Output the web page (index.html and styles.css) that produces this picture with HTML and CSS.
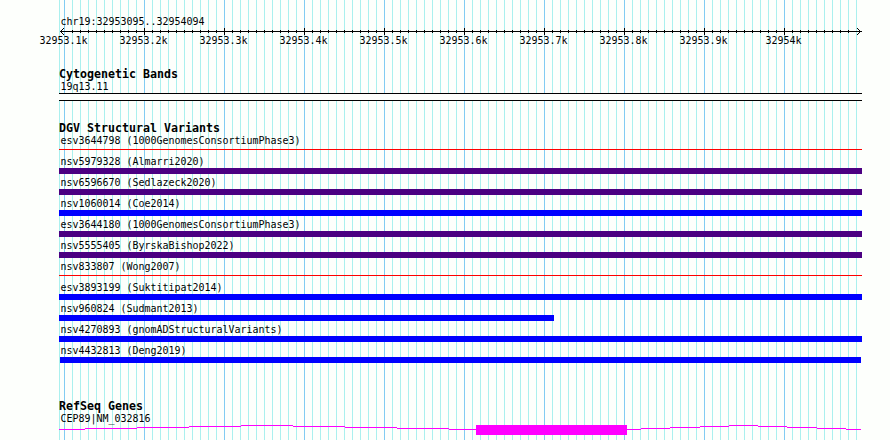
FILE: index.html
```
<!DOCTYPE html>
<html>
    <head>
        <meta charset="utf-8">
        <title>chr19:32953095..32954094</title>
        <link rel="stylesheet" href="styles.css">
    </head>
    <body>
        <div class="browser">
            <div class="region">chr19:32953095..32954094</div>
            <svg class="ruler" width="804" height="8" viewBox="0 0 804 8" shape-rendering="crispEdges">
                <defs>
                    <pattern id="minor" x="5" width="8" height="8" patternUnits="userSpaceOnUse">
                        <rect x="0" y="2" width="1" height="3"/>
                    </pattern>
                    <pattern id="major" x="5" width="80" height="8" patternUnits="userSpaceOnUse">
                        <rect x="0" y="0" width="1" height="7"/>
                    </pattern>
                </defs>
                <rect x="1" y="3" width="802" height="1"/>
                <rect x="12" y="0" width="780" height="8" fill="url(#minor)"/>
                <rect x="12" y="0" width="780" height="8" fill="url(#major)"/>
                <!-- arrow heads -->
                <path d="M2 2h1v1h-1zM3 1h1v1h-1zM4 0h1v1h-1zM2 4h1v1h-1zM3 5h1v1h-1zM4 6h1v1h-1z"/>
                <path d="M800 2h1v1h-1zM799 1h1v1h-1zM798 0h1v1h-1zM800 4h1v1h-1zM799 5h1v1h-1zM798 6h1v1h-1z"/>
            </svg>
            <div class="scale">
                <span>32953.1k</span>
                <span>32953.2k</span>
                <span>32953.3k</span>
                <span>32953.4k</span>
                <span>32953.5k</span>
                <span>32953.6k</span>
                <span>32953.7k</span>
                <span>32953.8k</span>
                <span>32953.9k</span>
                <span>32954k</span>
            </div>

            <div class="track cyto">
                <h2>Cytogenetic Bands</h2>
                <div class="label">19q13.11</div>
                <div class="band"></div>
            </div>

            <div class="track variants">
                <h2>DGV Structural Variants</h2>
                <div class="row">
                    <div class="label">esv3644798 (1000GenomesConsortiumPhase3)</div>
                    <div class="bar loss"></div>
                </div>
                <div class="row">
                    <div class="label">nsv5979328 (Almarri2020)</div>
                    <div class="bar complex"></div>
                </div>
                <div class="row">
                    <div class="label">nsv6596670 (Sedlazeck2020)</div>
                    <div class="bar complex"></div>
                </div>
                <div class="row">
                    <div class="label">nsv1060014 (Coe2014)</div>
                    <div class="bar gain"></div>
                </div>
                <div class="row">
                    <div class="label">esv3644180 (1000GenomesConsortiumPhase3)</div>
                    <div class="bar complex"></div>
                </div>
                <div class="row">
                    <div class="label">nsv5555405 (ByrskaBishop2022)</div>
                    <div class="bar complex"></div>
                </div>
                <div class="row">
                    <div class="label">nsv833807 (Wong2007)</div>
                    <div class="bar loss"></div>
                </div>
                <div class="row">
                    <div class="label">esv3893199 (Suktitipat2014)</div>
                    <div class="bar gain"></div>
                </div>
                <div class="row">
                    <div class="label">nsv960824 (Sudmant2013)</div>
                    <div class="bar gain short"></div>
                </div>
                <div class="row">
                    <div class="label">nsv4270893 (gnomADStructuralVariants)</div>
                    <div class="bar gain"></div>
                </div>
                <div class="row">
                    <div class="label">nsv4432813 (Deng2019)</div>
                    <div class="bar gain inset"></div>
                </div>
            </div>

            <div class="track genes">
                <h2>RefSeq Genes</h2>
                <div class="label">CEP89|NM_032816</div>
                <svg class="gene" width="803" height="10" viewBox="0 0 803 10" shape-rendering="crispEdges">
                    <!-- intron -->
                    <path d="M0 4h26v1h-26zM26 3h52v1h-52zM78 2h52v1h-52zM130 1h52v1h-52zM182 0h52v1h-52z"/>
                    <path d="M234 1h52v1h-52zM286 2h52v1h-52zM338 3h52v1h-52zM390 4h27v1h-27z"/>
                    <!-- exon -->
                    <rect x="417" y="0" width="151" height="10"/>
                    <path d="M568 4h14v1h-14zM582 3h29v1h-29zM611 2h30v1h-30zM641 1h29v1h-29zM670 0h29v1h-29zM699 1h29v1h-29zM728 2h30v1h-30zM758 3h29v1h-29zM787 4h15v1h-15z"/>
                </svg>
            </div>
        </div>
    </body>
</html>
```
FILE: styles.css
```
body{
    margin: 0;
    background-color: #fdfffc;
    font-family: "DejaVu Sans Mono", "Liberation Mono", monospace;
    font-size: 9.97px;
    color: black;
    overflow: hidden;
}
.browser{
    width: 803px;
    height: 440px;
    margin-left: 59px;
    box-sizing: border-box;
    padding-top: 15px;
    /* first base, every 100 bases, every 10 bases */
    background-image:
        linear-gradient(#aaf0ee, #aaf0ee),
        linear-gradient(to right, #82ccf2 1px, transparent 1px),
        linear-gradient(to right, #aaf0ee 1px, transparent 1px);
    background-size: 1px 100%, 80px 100%, 8px 100%;
    background-position: 0 0, 5px 0, 5px 0;
    background-repeat: no-repeat, repeat-x, repeat-x;
}
.region, .label{
    height: 12px;
    line-height: 14px;
    padding-left: 1.5px;
    white-space: nowrap;
}
.ruler{
    display: block;
    margin-top: 1px;
    overflow: visible;
}
.scale{
    display: flex;
    height: 12px;
    line-height: 12px;
    margin-left: -19.5px;
    margin-top: -1px;
    margin-right: -20px;
}
.scale span{
    flex: 0 0 80px;
    box-sizing: border-box;
}
.scale span:last-child{
    padding-left: 6px;
}
h2{
    margin: 0;
    height: 12px;
    line-height: 12px;
    font-size: 11.63px;
    font-weight: bold;
    white-space: nowrap;
}
.cyto{
    margin-top: 21px;
}
.band{
    height: 6px;
    margin-top: 1px;
    background-color: #fdfffc;
    border-top: 1px solid black;
    border-bottom: 1px solid black;
}
.variants{
    margin-top: 21px;
}
.row{
    height: 21px;
}
.bar{
    height: 6px;
    margin-top: 1px;
}
.gain{
    background-color: blue;
}
.complex{
    background-color: indigo;
}
.loss{
    height: 1px;
    margin-top: 3px;
    background-color: red;
}
.short{
    width: 495px;
}
.inset{
    margin-left: 1px;
    margin-right: 1px;
}
.genes{
    margin-top: 35px;
}
.gene{
    display: block;
    margin-top: 1px;
    fill: magenta;
}
```
